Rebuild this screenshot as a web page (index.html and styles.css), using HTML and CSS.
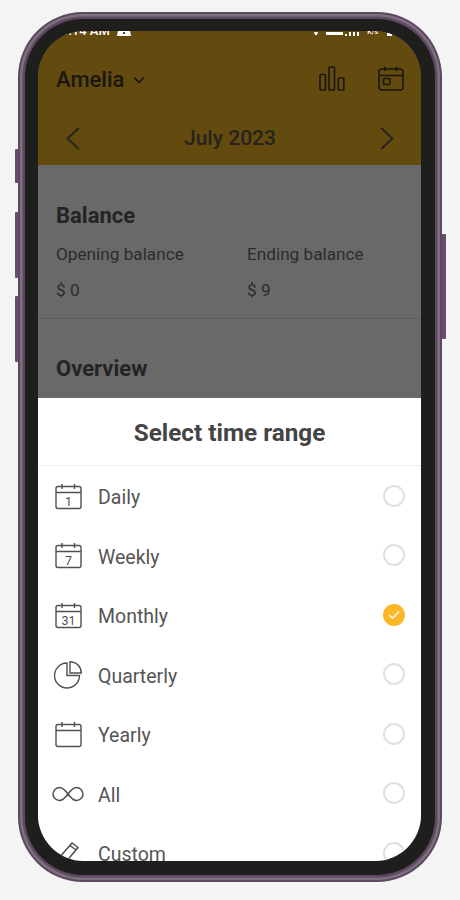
FILE: index.html
```html
<!DOCTYPE html>
<html lang="en">
<head>
    <meta charset="UTF-8">
    <meta name="viewport" content="width=device-width, initial-scale=1.0">
    <title>Select time range</title>
    <link rel="stylesheet" href="styles.css">
</head>
<body>
    <div class="phone">
        <span class="side-btn side-btn-1"></span>
        <span class="side-btn side-btn-2"></span>
        <span class="side-btn side-btn-3"></span>
        <span class="side-btn side-btn-4"></span>

        <div class="screen">
            <!-- Barre du haut -->
            <div class="topbar">
                <div class="status">
                    <span class="status-time">1:14 AM</span>
                    <svg class="status-note" width="16" height="6" viewBox="0 0 16 6"><path d="M1 6 L2 0 H14 L15 6 Z M7 2 V4 H9 V2 Z" fill="#fff" fill-rule="evenodd"/></svg>
                    <span class="status-right">
                        <svg width="45" height="4" viewBox="0 0 45 4"><path d="M0 0h4l-1 3h-2z M12 0h17v3h-17z M31 2h2v2h-2z M35 0h2v4h-2z M39 0h2v4h-2z M43 0h2v4h-2z" fill="#fff"/></svg>
                        <span class="status-speed">K/s</span>
                        <svg class="status-batt" width="5" height="3" viewBox="0 0 5 3"><rect width="5" height="3" fill="#fff"/></svg>
                    </span>
                </div>
                <div class="topbar-row">
                    <div class="account">
                        <span class="account-name">Amelia</span>
                        <svg width="12" height="8" viewBox="0 0 12 8" fill="none" stroke="#191710" stroke-width="1.6"><path d="M1 1.5 L6 6.3 L11 1.5"/></svg>
                    </div>
                    <div class="topbar-icons">
                        <svg width="26" height="25" viewBox="0 0 26 25" fill="none" stroke="#191710" stroke-width="1.6">
                            <rect x="1" y="8.5" width="5.5" height="15.5" rx="0.8"/>
                            <rect x="10" y="1" width="5.5" height="23" rx="0.8"/>
                            <rect x="19.3" y="12" width="5.5" height="12" rx="0.8"/>
                        </svg>
                        <svg width="26" height="25" viewBox="0 0 26 25" fill="none" stroke="#191710" stroke-width="1.6">
                            <rect x="1" y="3" width="24" height="21" rx="3"/>
                            <path d="M1 9.5 H25 M7 0.5 V5 M18.5 0.5 V5"/>
                            <rect x="5.5" y="12.5" width="6.5" height="6" rx="1"/>
                        </svg>
                    </div>
                </div>
                <div class="month-row">
                    <svg width="14" height="23" viewBox="0 0 14 23" fill="none" stroke="#26241d" stroke-width="1.9"><path d="M12.8 1 L1.6 11.5 L12.8 22"/></svg>
                    <span class="month-title">July 2023</span>
                    <svg width="14" height="23" viewBox="0 0 14 23" fill="none" stroke="#26241d" stroke-width="1.9"><path d="M1.2 1 L12.4 11.5 L1.2 22"/></svg>
                </div>
            </div>

            <!-- Contenu derrière le panneau -->
            <div class="content">
                <section class="balance">
                    <h2>Balance</h2>
                    <div class="balance-cols">
                        <div class="balance-col">
                            <p>Opening balance</p>
                            <p>$ 0</p>
                        </div>
                        <div class="balance-col">
                            <p>Ending balance</p>
                            <p>$ 9</p>
                        </div>
                    </div>
                </section>
                <section class="overview">
                    <h2>Overview</h2>
                </section>
            </div>

            <!-- Panneau de sélection -->
            <div class="sheet">
                <h1 class="sheet-title">Select time range</h1>
                <ul class="options">
                    <li class="option">
                        <svg class="option-icon" width="28" height="28" viewBox="0 0 28 28" fill="none" stroke="#505050" stroke-width="1.4">
                            <rect x="2" y="3.5" width="25" height="22" rx="2"/>
                            <path d="M2 9.5 H27 M8 1 V6 M20.5 1 V6"/>
                            <text x="14.5" y="22.5" class="cal-num">1</text>
                        </svg>
                        <span class="option-label">Daily</span>
                        <span class="radio"></span>
                    </li>
                    <li class="option">
                        <svg class="option-icon" width="28" height="28" viewBox="0 0 28 28" fill="none" stroke="#505050" stroke-width="1.4">
                            <rect x="2" y="3.5" width="25" height="22" rx="2"/>
                            <path d="M2 9.5 H27 M8 1 V6 M20.5 1 V6"/>
                            <text x="14.5" y="22.5" class="cal-num">7</text>
                        </svg>
                        <span class="option-label">Weekly</span>
                        <span class="radio"></span>
                    </li>
                    <li class="option">
                        <svg class="option-icon" width="28" height="28" viewBox="0 0 28 28" fill="none" stroke="#505050" stroke-width="1.4">
                            <rect x="2" y="3.5" width="25" height="22" rx="2"/>
                            <path d="M2 9.5 H27 M8 1 V6 M20.5 1 V6"/>
                            <text x="14.5" y="22.5" class="cal-num">31</text>
                        </svg>
                        <span class="option-label">Monthly</span>
                        <span class="radio radio-on">
                            <svg width="12" height="10" viewBox="0 0 12 10" fill="none" stroke="#fff" stroke-width="1.3"><path d="M1 5 L4.5 8 L11 1.5"/></svg>
                        </span>
                    </li>
                    <li class="option">
                        <svg class="option-icon" width="28" height="28" viewBox="0 0 28 28" fill="none" stroke="#505050" stroke-width="1.4">
                            <path d="M13 2 A12.5 12.5 0 1 0 25.5 14.5 H13 Z"/>
                            <path d="M16 0.7 A11.3 11.3 0 0 1 27.3 12 H16 Z"/>
                        </svg>
                        <span class="option-label">Quarterly</span>
                        <span class="radio"></span>
                    </li>
                    <li class="option">
                        <svg class="option-icon" width="28" height="28" viewBox="0 0 28 28" fill="none" stroke="#505050" stroke-width="1.4">
                            <rect x="2" y="3.5" width="25" height="22" rx="2"/>
                            <path d="M2 9.5 H27 M8 1 V6 M20.5 1 V6"/>
                        </svg>
                        <span class="option-label">Yearly</span>
                        <span class="radio"></span>
                    </li>
                    <li class="option">
                        <svg class="option-icon option-icon-wide" width="32" height="28" viewBox="0 0 32 28" fill="none" stroke="#505050" stroke-width="1.5">
                            <path d="M16 14 C13 10 11 7.5 7.5 7.5 C4 7.5 1 10.5 1 14 C1 17.5 4 20.5 7.5 20.5 C11 20.5 13 18 16 14 C19 10 21 7.5 24.5 7.5 C28 7.5 31 10.5 31 14 C31 17.5 28 20.5 24.5 20.5 C21 20.5 19 18 16 14 Z"/>
                        </svg>
                        <span class="option-label">All</span>
                        <span class="radio"></span>
                    </li>
                    <li class="option">
                        <svg class="option-icon" width="28" height="28" viewBox="0 0 28 28" fill="none" stroke="#505050" stroke-width="1.5">
                            <path d="M3 24 L5 18 L18 3 L24 7.5 L11 23 Z M16 5.5 L22 10"/>
                        </svg>
                        <span class="option-label">Custom</span>
                        <span class="radio"></span>
                    </li>
                </ul>
            </div>
        </div>
    </div>
</body>
</html>
```

FILE: styles.css
```css
/* Style général */
* {
    box-sizing: border-box;
}

body {
    font-family: Roboto, "Liberation Sans", sans-serif;
    margin: 0;
    padding: 0;
    background-color: #f4f4f4;
    color: #333;
    height: 900px;
    overflow: hidden;
}

h1, h2, p, ul {
    margin: 0;
    padding: 0;
}

/* Téléphone */
.phone {
    position: relative;
    width: 410px;
    height: 856px;
    margin: 19px 25px 0;
    padding: 12px 14px 14px 13px;
    background: #1e1e1c;
    border-radius: 58px;
    box-shadow: 0 0 0 2.5px #5f4763, 0 0 0 5px #7b727c, 0 0 0 7px #5f4763;
}

.side-btn {
    position: absolute;
    width: 3.5px;
    background: #6a4a6e;
    border-radius: 1px;
}

.side-btn-1 { left: -10.5px; top: 130px; height: 34px; }
.side-btn-2 { left: -10.5px; top: 193px; height: 66px; }
.side-btn-3 { left: -10.5px; top: 277px; height: 66px; }
.side-btn-4 { right: -10.5px; top: 215px; height: 105px; }

.screen {
    display: flex;
    flex-direction: column;
    height: 830px;
    overflow: hidden;
    background: #696969;
    border-radius: 46px;
}

/* Barre du haut */
.topbar {
    height: 134px;
    background: #634a0e;
    color: #191710;
}

.status {
    display: flex;
    align-items: flex-end;
    height: 4px;
    padding: 0 29px 0 23px;
    color: #fff;
    font-size: 13px;
    font-weight: 500;
    line-height: 14px;
}

.status-time {
    margin-bottom: -3px;
    white-space: nowrap;
}

.status-note {
    margin-left: 6px;
    margin-bottom: -1px;
}

.status-right {
    display: flex;
    align-items: flex-end;
    margin-left: auto;
    margin-bottom: -1px;
}

.status-speed {
    font-size: 7px;
    line-height: 8px;
    margin-left: 8px;
}

.status-batt {
    margin-left: 9px;
}

.topbar-row {
    display: flex;
    justify-content: space-between;
    align-items: center;
    height: 25px;
    margin-top: 31px;
    padding: 0 17px 0 18px;
}

.account {
    display: flex;
    align-items: center;
    gap: 9px;
    padding-top: 2px;
}

.account-name {
    font-size: 22px;
    font-weight: 500;
}

.topbar-icons {
    display: flex;
    gap: 33px;
}

.month-row {
    display: flex;
    justify-content: space-between;
    align-items: center;
    height: 24px;
    margin-top: 35px;
    padding: 0 27px 0 28px;
    color: #26241d;
}

.month-title {
    font-size: 21px;
    font-weight: 500;
}

/* Contenu assombri */
.content {
    height: 233px;
    overflow: hidden;
    color: #242424;
}

.content h2 {
    font-size: 22px;
    font-weight: 700;
    line-height: 26px;
}

.balance {
    height: 154px;
    padding: 38px 18px 0;
    border-bottom: 1px solid #5e5e5e;
}

.balance-cols {
    display: flex;
    margin-top: 15px;
}

.balance-col {
    flex: none;
    width: 191px;
}

.balance-col p {
    font-size: 17.2px;
    line-height: 20px;
    margin-bottom: 16px;
    color: #2c2c2c;
}

.overview {
    padding: 37px 18px 0;
}

/* Panneau */
.sheet {
    flex: 1;
    min-height: 0;
    background: #fff;
}

.sheet-title {
    height: 68px;
    font-size: 24.3px;
    font-weight: 700;
    line-height: 70px;
    text-align: center;
    color: #444;
    border-bottom: 1px solid #efefef;
}

.options {
    list-style: none;
    padding-top: 1px;
}

.option {
    display: flex;
    align-items: center;
    height: 59.5px;
    padding: 0 16px;
}

.option-icon {
    flex: none;
    margin-right: 16px;
}

.option-icon-wide {
    margin-left: -2px;
    margin-right: 14px;
}

.cal-num {
    fill: #505050;
    stroke: none;
    font-size: 12.5px;
    font-weight: 400;
    text-anchor: middle;
}

.option-label {
    padding-top: 2px;
    font-size: 19.5px;
    color: #555;
}

.radio {
    display: flex;
    align-items: center;
    justify-content: center;
    width: 22px;
    height: 22px;
    margin-left: auto;
    margin-top: -2px;
    border: 2px solid #e0e0e0;
    border-radius: 50%;
}

.radio-on {
    background: #fdb827;
    border-color: #fdb827;
}
```
